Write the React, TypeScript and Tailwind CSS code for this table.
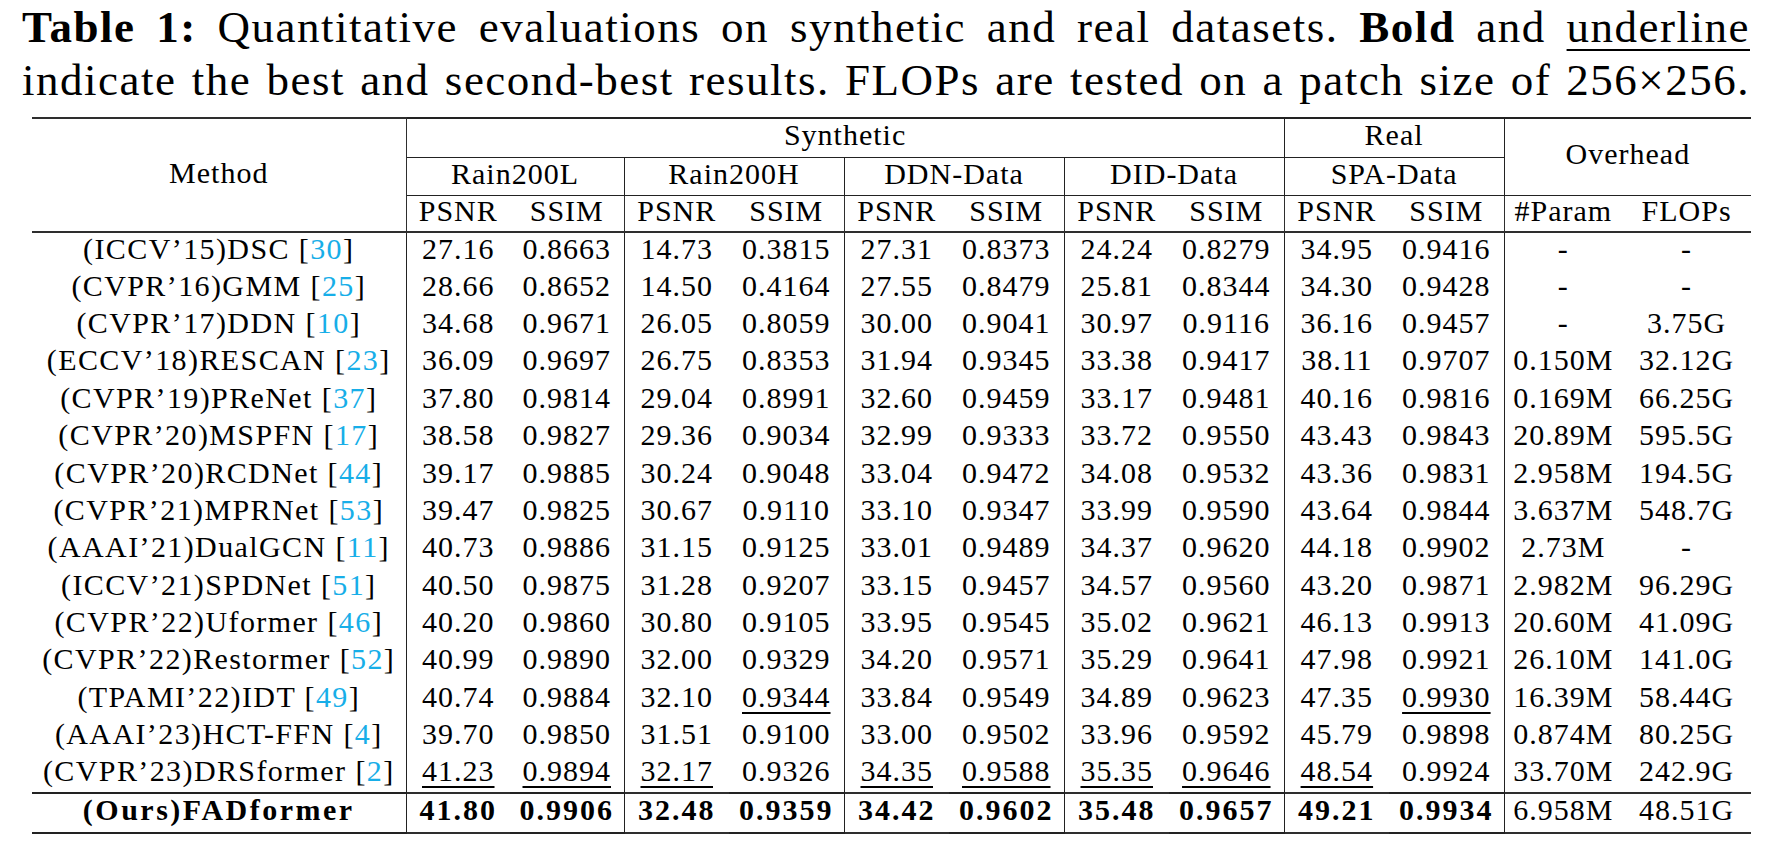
import React from 'react';

type Cell = { v: string; u?: boolean };

interface Row {
    method: string;
    cite?: string;
    values: Cell[];
    bold?: boolean;
}

function cells(text: string): Cell[] {
    return text.split(' ').map(t => (t.startsWith('_') ? { v: t.slice(1), u: true } : { v: t }));
}

const rows: Row[] = [
    { method: '(ICCV’15)DSC', cite: '30', values: cells('27.16 0.8663 14.73 0.3815 27.31 0.8373 24.24 0.8279 34.95 0.9416 - -') },
    { method: '(CVPR’16)GMM', cite: '25', values: cells('28.66 0.8652 14.50 0.4164 27.55 0.8479 25.81 0.8344 34.30 0.9428 - -') },
    { method: '(CVPR’17)DDN', cite: '10', values: cells('34.68 0.9671 26.05 0.8059 30.00 0.9041 30.97 0.9116 36.16 0.9457 - 3.75G') },
    { method: '(ECCV’18)RESCAN', cite: '23', values: cells('36.09 0.9697 26.75 0.8353 31.94 0.9345 33.38 0.9417 38.11 0.9707 0.150M 32.12G') },
    { method: '(CVPR’19)PReNet', cite: '37', values: cells('37.80 0.9814 29.04 0.8991 32.60 0.9459 33.17 0.9481 40.16 0.9816 0.169M 66.25G') },
    { method: '(CVPR’20)MSPFN', cite: '17', values: cells('38.58 0.9827 29.36 0.9034 32.99 0.9333 33.72 0.9550 43.43 0.9843 20.89M 595.5G') },
    { method: '(CVPR’20)RCDNet', cite: '44', values: cells('39.17 0.9885 30.24 0.9048 33.04 0.9472 34.08 0.9532 43.36 0.9831 2.958M 194.5G') },
    { method: '(CVPR’21)MPRNet', cite: '53', values: cells('39.47 0.9825 30.67 0.9110 33.10 0.9347 33.99 0.9590 43.64 0.9844 3.637M 548.7G') },
    { method: '(AAAI’21)DualGCN', cite: '11', values: cells('40.73 0.9886 31.15 0.9125 33.01 0.9489 34.37 0.9620 44.18 0.9902 2.73M -') },
    { method: '(ICCV’21)SPDNet', cite: '51', values: cells('40.50 0.9875 31.28 0.9207 33.15 0.9457 34.57 0.9560 43.20 0.9871 2.982M 96.29G') },
    { method: '(CVPR’22)Uformer', cite: '46', values: cells('40.20 0.9860 30.80 0.9105 33.95 0.9545 35.02 0.9621 46.13 0.9913 20.60M 41.09G') },
    { method: '(CVPR’22)Restormer', cite: '52', values: cells('40.99 0.9890 32.00 0.9329 34.20 0.9571 35.29 0.9641 47.98 0.9921 26.10M 141.0G') },
    { method: '(TPAMI’22)IDT', cite: '49', values: cells('40.74 0.9884 32.10 _0.9344 33.84 0.9549 34.89 0.9623 47.35 _0.9930 16.39M 58.44G') },
    { method: '(AAAI’23)HCT-FFN', cite: '4', values: cells('39.70 0.9850 31.51 0.9100 33.00 0.9502 33.96 0.9592 45.79 0.9898 0.874M 80.25G') },
    { method: '(CVPR’23)DRSformer', cite: '2', values: cells('_41.23 _0.9894 _32.17 0.9326 _34.35 _0.9588 _35.35 _0.9646 _48.54 0.9924 33.70M 242.9G') },
];

const ours: Row = {
    method: '(Ours)FADformer',
    bold: true,
    values: cells('41.80 0.9906 32.48 0.9359 34.42 0.9602 35.48 0.9657 49.21 0.9934 6.958M 48.51G'),
};

const datasets = ['Rain200L', 'Rain200H', 'DDN-Data', 'DID-Data', 'SPA-Data'];

const thick = 'border-[#2e2e2e]';
const thin = 'border-[#222]';

function DataRow({ row, last }: { row: Row; last?: boolean }) {
    const edge = last ? `border-t-2 border-b-2 ${thick}` : '';
    return (
        <tr className={last ? 'h-[40px]' : 'h-[37.4px]'}>
            <td className={`border-r ${thin} pb-[5px] text-center ${row.bold ? 'font-bold tracking-[2.5px]' : 'tracking-[1.4px]'} ${edge}`}>
                {row.method}
                {row.cite && (
                    <>
                        {' '}[<span className="text-[#17aee8]">{row.cite}</span>]
                    </>
                )}
            </td>
            {row.values.map((c, i) => {
                const overhead = i >= 10;
                const groupEnd = i % 2 === 1 && i < 10;
                return (
                    <td
                        key={i}
                        className={`pb-[5px] text-center ${groupEnd ? `border-r ${thin}` : ''} ${row.bold && !overhead ? 'font-bold tracking-[2px]' : ''} ${edge}`}
                    >
                        <span className={c.u ? 'underline decoration-[1.5px] underline-offset-[5px]' : ''}>{c.v}</span>
                    </td>
                );
            })}
        </tr>
    );
}

export default function App() {
    return (
        <div className="w-[1785px] h-[849px] bg-white text-black font-['Liberation_Serif',serif]">
            <div className="pl-[22px] pr-[35px] pt-[1px] text-[45px] leading-[53px] tracking-[1.5px]">
                <p className="text-justify [text-align-last:justify]">
                    <b>Table 1:</b> Quantitative evaluations on synthetic and real datasets. <b>Bold</b> and{' '}
                    <span className="underline decoration-[2px] underline-offset-[7px]">underline</span>
                </p>
                <p className="text-justify [text-align-last:justify]">
                    indicate the best and second-best results. FLOPs are tested on a patch size of 256×256.
                </p>
            </div>
            <table className="ml-[32px] mt-[10px] w-[1719px] table-fixed border-collapse font-['Liberation_Serif',serif] text-[30px] leading-none tracking-[1px]">
                <colgroup>
                    <col className="w-[374px]" />
                    <col className="w-[104px]" />
                    <col className="w-[114px]" />
                    <col className="w-[105px]" />
                    <col className="w-[115px]" />
                    <col className="w-[105px]" />
                    <col className="w-[115px]" />
                    <col className="w-[105px]" />
                    <col className="w-[115px]" />
                    <col className="w-[105px]" />
                    <col className="w-[115px]" />
                    <col className="w-[118px]" />
                    <col className="w-[129px]" />
                </colgroup>
                <thead>
                    <tr className="h-[39px]">
                        <th rowSpan={3} className={`border-t-2 border-b-2 ${thick} border-r pb-[5px] font-normal`}>
                            Method
                        </th>
                        <th colSpan={8} className={`border-t-2 ${thick} border-b border-r ${thin} pb-[5px] font-normal`}>
                            Synthetic
                        </th>
                        <th colSpan={2} className={`border-t-2 ${thick} border-b border-r ${thin} pb-[5px] font-normal`}>
                            Real
                        </th>
                        <th colSpan={2} rowSpan={2} className={`border-t-2 ${thick} border-b ${thin} pb-[5px] font-normal`}>
                            Overhead
                        </th>
                    </tr>
                    <tr className="h-[38px]">
                        {datasets.map(d => (
                            <th key={d} colSpan={2} className={`border-b border-r ${thin} pb-[5px] font-normal`}>
                                {d}
                            </th>
                        ))}
                    </tr>
                    <tr className="h-[37px]">
                        {datasets.map(d => (
                            <React.Fragment key={d}>
                                <th className={`border-b-2 ${thick} pb-[5px] font-normal`}>PSNR</th>
                                <th className={`border-b-2 ${thick} border-r pb-[5px] font-normal`}>SSIM</th>
                            </React.Fragment>
                        ))}
                        <th className={`border-b-2 ${thick} pb-[5px] font-normal`}>#Param</th>
                        <th className={`border-b-2 ${thick} pb-[5px] font-normal`}>FLOPs</th>
                    </tr>
                </thead>
                <tbody>
                    {rows.map(r => (
                        <DataRow key={r.method} row={r} />
                    ))}
                    <DataRow row={ours} last />
                </tbody>
            </table>
        </div>
    );
}
